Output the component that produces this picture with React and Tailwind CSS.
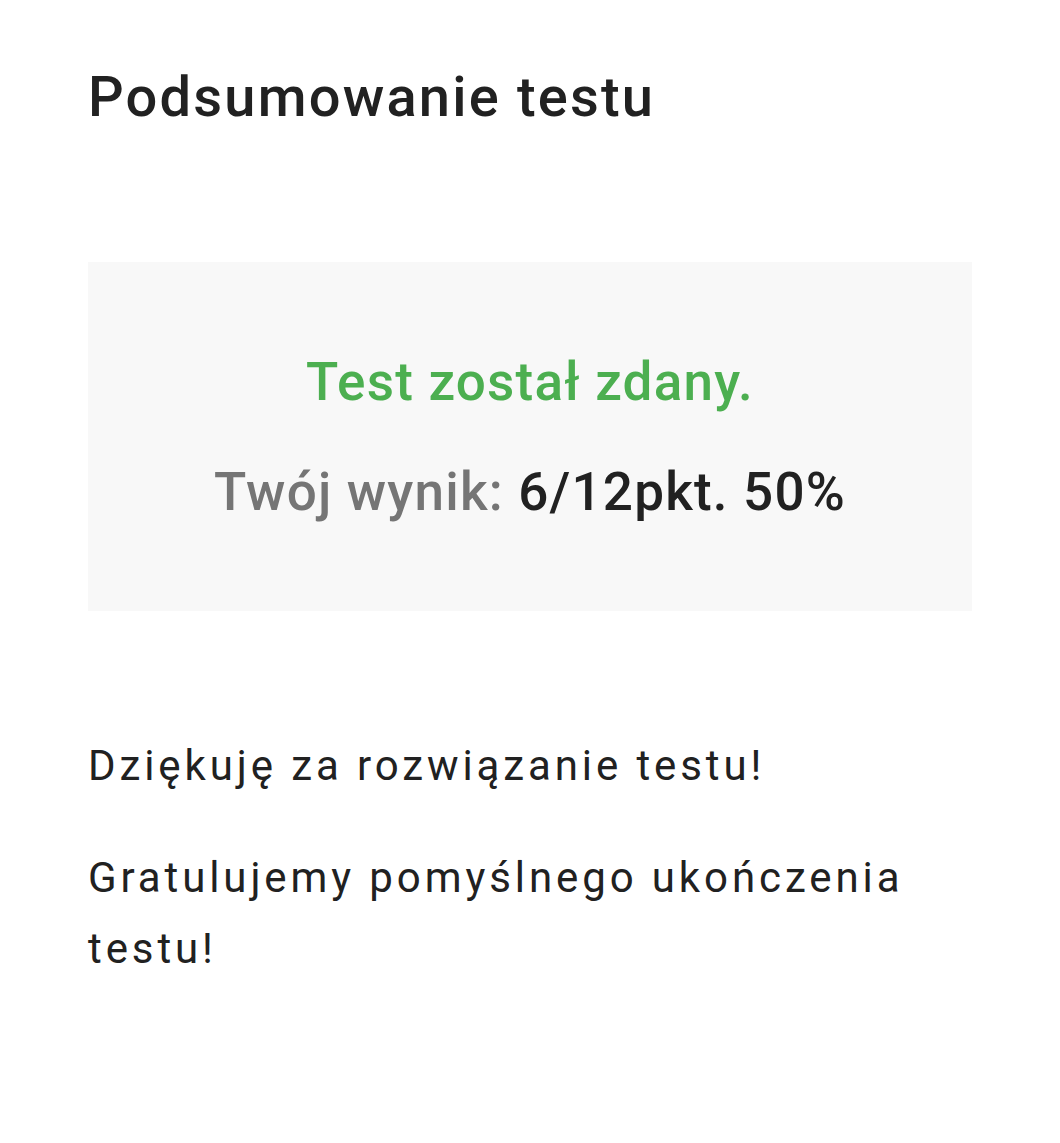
export default function App() {
  return (
    <div className="min-h-screen bg-white px-[88px] pt-[65px] font-['Roboto',sans-serif]">
      <h1 className="text-[56px] leading-[64px] font-medium tracking-[2.2px] text-[#212121]">
        Podsumowanie testu
      </h1>

      <div className="mt-[133px] h-[349px] bg-[#f8f8f8] flex flex-col items-center justify-center tracking-[1.2px]">
        <p className="text-[53px] leading-[60px] font-medium text-[#4caf50]">
          Test został zdany.
        </p>
        <p className="mt-[50px] text-[53px] leading-[60px] font-medium">
          <span className="text-[#757575]">Twój wynik: </span>
          <span className="text-[#212121]">6/12pkt. 50%</span>
        </p>
      </div>

      <div className="mt-[119px] text-[42px] leading-[71px] text-[#212121] tracking-[3.9px]">
        <p>Dziękuję za rozwiązanie testu!</p>
        <p className="mt-[41px]">Gratulujemy pomyślnego ukończenia testu!</p>
      </div>
    </div>
  );
}
